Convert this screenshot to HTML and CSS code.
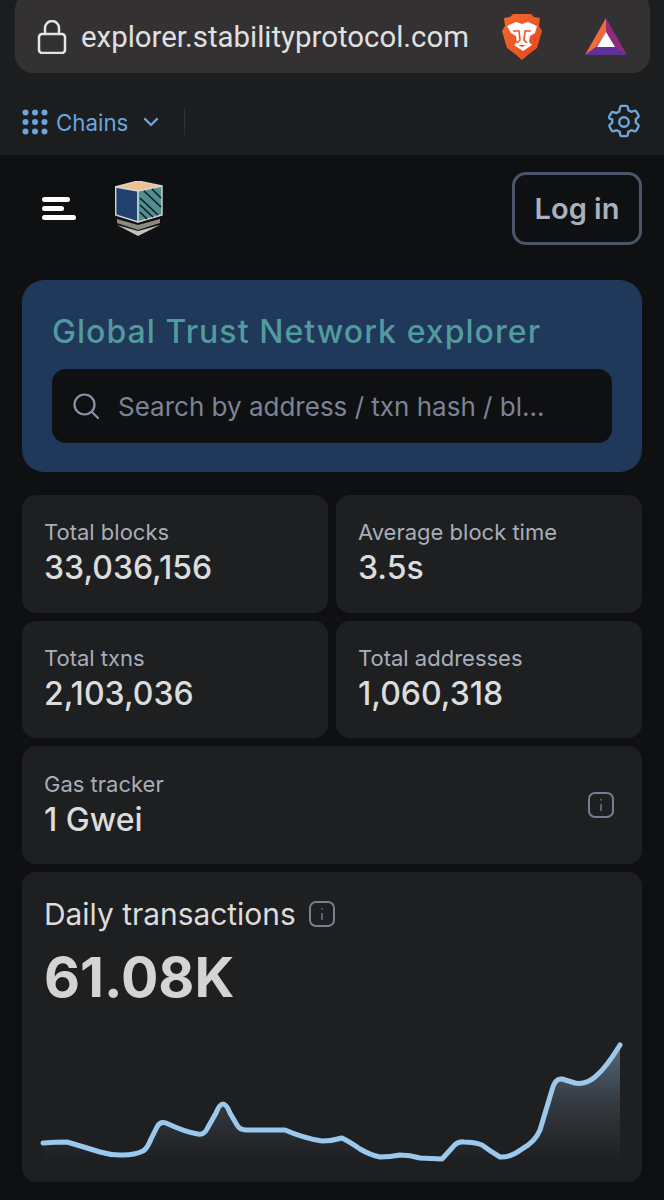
FILE: index.html
```html
<!DOCTYPE html>
<html lang="en">
<head>
    <meta charset="UTF-8">
    <meta name="viewport" content="width=device-width, initial-scale=1.0">
    <title>Global Trust Network explorer</title>
    <link rel="stylesheet" href="styles.css">
</head>
<body>
    <div class="browser-bar">
        <div class="address">
            <svg class="lock" width="30" height="34" viewBox="0 0 30 34" fill="none" stroke="#e4e4e4" stroke-width="2.5">
                <rect x="2" y="14" width="26" height="19" rx="3"/>
                <path d="M8 14V8a7 7 0 0 1 14 0v6"/>
            </svg>
            <span class="url">explorer.stabilityprotocol.com</span>
            <svg class="brave" width="40" height="48" viewBox="0 0 40 48">
                <defs>
                    <linearGradient id="braveFill" x1="0" y1="0" x2="1" y2="1">
                        <stop offset="0" stop-color="#f1692e"/>
                        <stop offset="1" stop-color="#e8471e"/>
                    </linearGradient>
                </defs>
                <path d="M11 1h18l3 3 6 1-1 8 3 5-5 17-8 6-7 6-7-6-8-6L0 18l3-5-1-8 6-1z" fill="url(#braveFill)"/>
                <path d="M5 13l9-4 6 2 6-2 9 4-2 7-5 3-1 6 3 3-9 6-9-6 3-3-1-6-5-3z" fill="#fff"/>
                <path d="M11 18h6l1 9-3 3M29 18h-6l-1 9 3 3" fill="none" stroke="#ec5a28" stroke-width="1.700"/>
                <path d="M16 32h8l-4 2z" fill="#ec5a28"/>
            </svg>
            <svg class="bat" width="42" height="38" viewBox="0 0 42 38">
                <polygon points="21,0 0,37 42,37" fill="#8e2b7c"/>
                <polygon points="21,0 0,37 11,29 21,14" fill="#ef6a3c"/>
                <polygon points="0,37 42,37 31,29 11,29" fill="#5f3199"/>
                <polygon points="21,14 12,29 30,29" fill="#fff"/>
            </svg>
        </div>
        <div class="chain-row">
            <div class="chains">
                <svg width="26" height="26" viewBox="0 0 26 26" fill="#6ba6dc">
                    <circle cx="3.500" cy="3.500" r="3"/><circle cx="13" cy="3.500" r="3"/><circle cx="22.500" cy="3.500" r="3"/>
                    <circle cx="3.500" cy="13" r="3"/><circle cx="13" cy="13" r="3"/><circle cx="22.500" cy="13" r="3"/>
                    <circle cx="3.500" cy="22.500" r="3"/><circle cx="13" cy="22.500" r="3"/><circle cx="22.500" cy="22.500" r="3"/>
                </svg>
                <span>Chains</span>
                <svg class="caret" width="16" height="10" viewBox="0 0 16 10" fill="none" stroke="#6ba6dc" stroke-width="2.400" stroke-linecap="round" stroke-linejoin="round">
                    <path d="M2 2l6 6 6-6"/>
                </svg>
                <div class="divider"></div>
            </div>
            <svg width="38" height="38" viewBox="0 0 24 24" fill="none" stroke="#6ba6dc" stroke-width="1.500" stroke-linecap="round" stroke-linejoin="round">
                <circle cx="12" cy="12" r="3"/>
                <path d="M9.6 2.600a1 1 0 0 1 1-.8h2.800a1 1 0 0 1 1 .8l.4 2a7.500 7.500 0 0 1 1.800 1l1.900-.7a1 1 0 0 1 1.200.4l1.400 2.400a1 1 0 0 1-.2 1.300l-1.500 1.300a7.500 7.500 0 0 1 0 2.100l1.500 1.300a1 1 0 0 1 .2 1.300l-1.400 2.400a1 1 0 0 1-1.200.4l-1.900-.7a7.500 7.500 0 0 1-1.800 1l-.4 2a1 1 0 0 1-1 .8h-2.800a1 1 0 0 1-1-.8l-.4-2a7.500 7.500 0 0 1-1.800-1l-1.900.7a1 1 0 0 1-1.200-.4l-1.400-2.400a1 1 0 0 1 .2-1.300l1.500-1.300a7.500 7.500 0 0 1 0-2.100L2.900 9.800a1 1 0 0 1-.2-1.300l1.400-2.400a1 1 0 0 1 1.200-.4l1.900.7a7.500 7.500 0 0 1 1.800-1z"/>
            </svg>
        </div>
    </div>

    <header class="top-nav">
        <div class="burger"><i class="b1"></i><i class="b2"></i><i class="b3"></i></div>
        <svg class="logo" width="48" height="56" viewBox="0 0 48 56">
            <polygon points="2,38 23,44 45,38 45,42 23,49 2,42" fill="#8a8a82"/>
            <polygon points="2,44 23,50 45,44 23,55" fill="#c4c4b9"/>
            <polygon points="23,0 0,6 23,10 47,5" fill="#f2c08e" stroke="#d4d4d4" stroke-width="1.400"/>
            <polygon points="0.700,6 23,10 23,41 0.700,34" fill="#22406f" stroke="#d4d4d4" stroke-width="1.400"/>
            <polygon points="23,10 47,5 47,34 23,41" fill="#4e8f91" stroke="#d4d4d4" stroke-width="1.400"/>
            <path d="M25 17l18 17M25 24l13 12M25 31l7 7M29 10l17 16M37 8l9 9" stroke="#15181b" stroke-width="1.600"/>
        </svg>
        <button class="login">Log in</button>
    </header>

    <section class="hero">
        <h1>Global Trust Network explorer</h1>
        <div class="search">
            <svg width="28" height="28" viewBox="0 0 28 28" fill="none" stroke="#8a93a5" stroke-width="2.200" stroke-linecap="round">
                <circle cx="12.500" cy="12.500" r="10"/>
                <path d="M20 20l6 6"/>
            </svg>
            <span>Search by address / txn hash / bl...</span>
        </div>
    </section>

    <main class="stats">
        <div class="stat">
            <div class="stat-label">Total blocks</div>
            <div class="stat-value">33,036,156</div>
        </div>
        <div class="stat">
            <div class="stat-label">Average block time</div>
            <div class="stat-value">3.5s</div>
        </div>
        <div class="stat">
            <div class="stat-label">Total txns</div>
            <div class="stat-value">2,103,036</div>
        </div>
        <div class="stat">
            <div class="stat-label">Total addresses</div>
            <div class="stat-value">1,060,318</div>
        </div>
        <div class="stat stat-wide">
            <div>
                <div class="stat-label">Gas tracker</div>
                <div class="stat-value">1 Gwei</div>
            </div>
            <svg class="info" width="26" height="26" viewBox="0 0 26 26" fill="none" stroke="#747f92" stroke-width="2">
                <rect x="1" y="1" width="24" height="24" rx="6"/>
                <path d="M13 12v7" stroke-width="1.400"/>
                <path d="M13 7v1.600" stroke-width="1.400"/>
            </svg>
        </div>
        <div class="chart-card">
            <div class="chart-title">
                <span>Daily transactions</span>
                <svg class="info" width="26" height="26" viewBox="0 0 26 26" fill="none" stroke="#747f92" stroke-width="2">
                    <rect x="1" y="1" width="24" height="24" rx="6"/>
                    <path d="M13 12v7" stroke-width="1.400"/>
                    <path d="M13 7v1.600" stroke-width="1.400"/>
                </svg>
            </div>
            <div class="chart-value">61.08K</div>
            <svg class="chart" width="620" height="140" viewBox="22 1041 620 140">
                <defs>
                    <linearGradient id="areaFill" gradientUnits="userSpaceOnUse" x1="0" y1="1045" x2="0" y2="1160">
                        <stop offset="0" stop-color="#566a79"/>
                        <stop offset="0.500" stop-color="#343a40"/>
                        <stop offset="1" stop-color="#1e1f21"/>
                    </linearGradient>
                </defs>
                <path d="M43 1143Q55 1142 67 1142Q84 1147 100 1152Q112 1155.500 123 1155Q135 1155 143 1151Q147 1149 151 1139L157 1127Q160 1121 166 1123Q185 1132 198 1134Q204 1135 207 1129L216 1113Q223 1095 230 1113L237 1125Q240 1130 246 1130L285 1130Q303 1138 322 1141Q332 1141 342 1138Q350 1142 360 1149Q370 1155 380 1157Q390 1157 400 1155Q410 1155 420 1158L442 1159L452 1148Q457 1141 464 1142Q474 1142 482 1145Q490 1151 500 1157Q510 1158 522 1149Q535 1142 540 1130L552 1090Q555 1078 562 1079L575 1083Q585 1085 595 1077Q606 1068 620 1045V1160H43Z" fill="url(#areaFill)"/>
                <path d="M43 1143Q55 1142 67 1142Q84 1147 100 1152Q112 1155.500 123 1155Q135 1155 143 1151Q147 1149 151 1139L157 1127Q160 1121 166 1123Q185 1132 198 1134Q204 1135 207 1129L216 1113Q223 1095 230 1113L237 1125Q240 1130 246 1130L285 1130Q303 1138 322 1141Q332 1141 342 1138Q350 1142 360 1149Q370 1155 380 1157Q390 1157 400 1155Q410 1155 420 1158L442 1159L452 1148Q457 1141 464 1142Q474 1142 482 1145Q490 1151 500 1157Q510 1158 522 1149Q535 1142 540 1130L552 1090Q555 1078 562 1079L575 1083Q585 1085 595 1077Q606 1068 620 1045" fill="none" stroke="#9bc9ee" stroke-width="5" stroke-linecap="round" stroke-linejoin="round"/>
            </svg>
        </div>
    </main>
</body>
</html>
```
FILE: styles.css
```css
body {
    margin: 0;
    background-color: #0f1012;
    font-family: Inter, "Liberation Sans", sans-serif;
    color: #dcdcdc;
}

.browser-bar {
    height: 155px;
    background-color: #1c1d1f;
    overflow: hidden;
}

.address {
    display: flex;
    align-items: center;
    height: 81px;
    margin: -8px 14px 0 15px;
    padding: 8px 22px 0;
    box-sizing: border-box;
    background-color: #333132;
    border-radius: 18px;
}

.lock {
    flex-shrink: 0;
}

.url {
    margin-left: 14px;
    font-family: Roboto, sans-serif;
    font-size: 29.4px;
    color: #e0e0e0;
    white-space: nowrap;
}

.brave {
    margin-left: 33px;
    flex-shrink: 0;
}

.bat {
    margin-left: 43px;
    flex-shrink: 0;
}

.chain-row {
    display: flex;
    align-items: center;
    justify-content: space-between;
    height: 82px;
    padding: 16px 21px 0 22px;
    box-sizing: border-box;
}

.chains {
    display: flex;
    align-items: center;
    color: #6ba6dc;
    font-size: 22.3px;
}

.chains span {
    margin-left: 8px;
}

.caret {
    margin-left: 15px;
}

.divider {
    width: 1px;
    height: 26px;
    margin-left: 25px;
    background-color: #303235;
}

.top-nav {
    display: flex;
    align-items: center;
    height: 125px;
    padding: 0 22px 18px 42px;
    box-sizing: border-box;
}

.burger {
    display: flex;
    flex-direction: column;
    gap: 4.5px;
}

.burger i {
    display: block;
    height: 4.5px;
    background-color: #fff;
    border-radius: 3px;
}

.b1 { width: 28px; }
.b2 { width: 22px; }
.b3 { width: 34px; }

.logo {
    margin-left: 39px;
}

.login {
    margin-left: auto;
    width: 130px;
    height: 73px;
    background: none;
    border: 3px solid #4a5568;
    border-radius: 14px;
    color: #a9b1bf;
    font-family: Inter, sans-serif;
    font-size: 29px;
    font-weight: 600;
}

.hero {
    margin: 0 22px;
    height: 192px;
    padding: 30px 30px 0;
    box-sizing: border-box;
    background-color: #20385a;
    border-radius: 22px;
}

.hero h1 {
    margin: 0 0 16px;
    font-size: 32px;
    line-height: 43px;
    font-weight: 500;
    letter-spacing: 1.05px;
    color: #519a9d;
    white-space: nowrap;
}

.search {
    display: flex;
    align-items: center;
    gap: 18px;
    height: 74px;
    padding: 0 20px;
    background-color: #0f1012;
    border-radius: 14px;
    color: #7b8496;
    font-size: 26px;
}

.stats {
    display: grid;
    grid-template-columns: 1fr 1fr;
    gap: 8px;
    margin: 23px 22px 0;
}

.stat {
    height: 117.5px;
    padding: 23px 22px 0;
    box-sizing: border-box;
    background-color: #1e1f21;
    border-radius: 14px;
}

.stat-label {
    font-size: 22px;
    line-height: 28px;
    color: #a8aeb8;
}

.stat-value {
    margin-top: 2px;
    font-size: 32px;
    line-height: 40px;
    font-weight: 500;
    color: #dcdcdc;
}

.stat-wide {
    grid-column: 1 / 3;
    display: flex;
    justify-content: space-between;
    align-items: center;
    padding: 0 28px 0 22px;
}

.chart-card {
    grid-column: 1 / 3;
    height: 310px;
    background-color: #1e1f21;
    border-radius: 14px;
    overflow: hidden;
}

.chart-title {
    display: flex;
    align-items: center;
    gap: 13px;
    padding: 24px 22px 0;
    font-size: 29.9px;
    line-height: 36px;
    font-weight: 400;
}

.chart-value {
    margin-top: 15px;
    padding: 0 22px;
    font-size: 55.5px;
    line-height: 60px;
    font-weight: 700;
    color: #d4d4d4;
}

.chart {
    display: block;
    margin-top: 34.5px;
}
```
